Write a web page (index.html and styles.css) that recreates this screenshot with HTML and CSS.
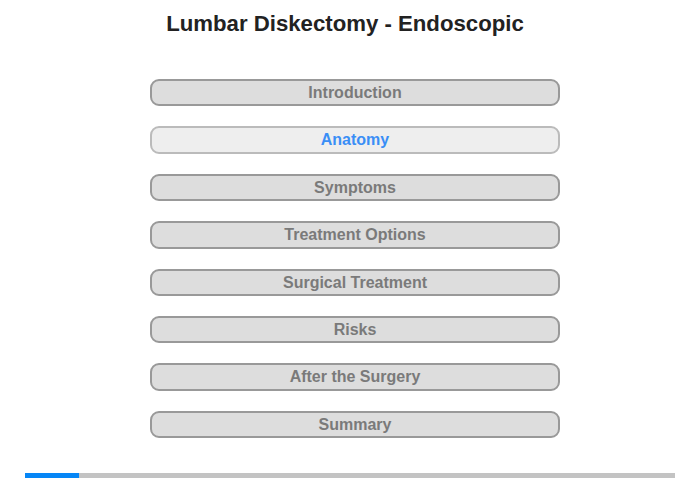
FILE: index.html
```html
<!DOCTYPE html>
<html>
<head>
<meta charset="utf-8">
<link rel="stylesheet" href="styles.css">
</head>
<body>
<div class="page">
  <h1 class="title">Lumbar Diskectomy - Endoscopic</h1>
  <nav class="menu">
    <div class="item">Introduction</div>
    <div class="item active">Anatomy</div>
    <div class="item">Symptoms</div>
    <div class="item">Treatment Options</div>
    <div class="item">Surgical Treatment</div>
    <div class="item">Risks</div>
    <div class="item">After the Surgery</div>
    <div class="item">Summary</div>
  </nav>
  <div class="progress"><div class="bar" style="width: 54px"></div></div>
</div>
</body>
</html>
```

FILE: styles.css
```css
html, body {
  margin: 0;
  padding: 0;
  background: #fff;
}
.page {
  width: 700px;
  height: 480px;
  font-family: "Liberation Sans", Arial, sans-serif;
  display: flex;
  flex-direction: column;
  align-items: center;
}
.title {
  margin: 11px 10px 0 0;
  font-size: 22.2px;
  font-weight: bold;
  color: #222;
  line-height: 26px;
  height: 26px;
}
.menu {
  margin: 42px 0 0 10px;
  display: flex;
  flex-direction: column;
  gap: 20px;
}
.item {
  box-sizing: border-box;
  width: 410px;
  height: 27.4px;
  border: 2px solid #999;
  border-radius: 9px;
  background: #ddd;
  color: #7a7a7a;
  font-size: 16px;
  font-weight: bold;
  text-align: center;
  line-height: 23px;
}
.item.active {
  background: #eee;
  border-color: #bbb;
  color: #3a8ef6;
}
.progress {
  margin-top: 35px;
  width: 650px;
  height: 5px;
  background: #c3c3c3;
}
.bar {
  height: 5px;
  background: #0686f6;
}
```
